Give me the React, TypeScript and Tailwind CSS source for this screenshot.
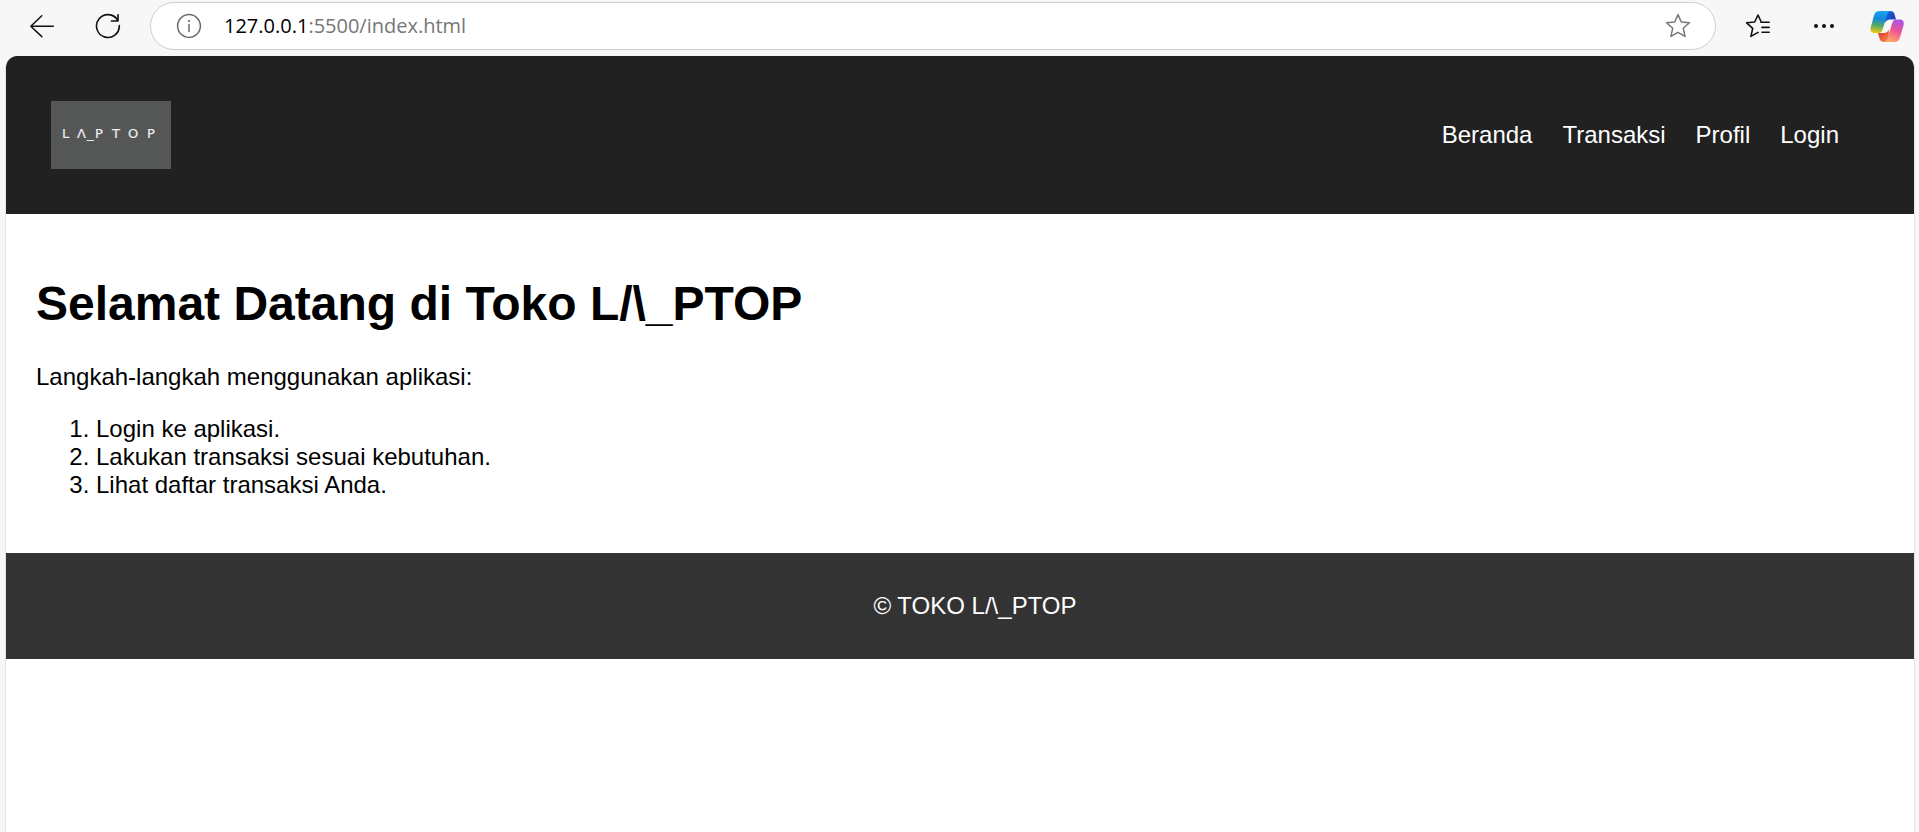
import React from "react";

const navLinks = ["Beranda", "Transaksi", "Profil", "Login"];

const steps = [
  "Login ke aplikasi.",
  "Lakukan transaksi sesuai kebutuhan.",
  "Lihat daftar transaksi Anda.",
];

function BackIcon() {
  return (
    <svg width="24" height="24" viewBox="0 0 24 24" fill="none" stroke="#111" strokeWidth="1.5" strokeLinecap="round" strokeLinejoin="round" aria-hidden="true">
      <path d="M23.3 12.2H.8M11.8 1.8.8 12.2l11 10.4" />
    </svg>
  );
}

function ReloadIcon() {
  return (
    <svg width="26" height="26" viewBox="0 0 26 26" fill="none" stroke="#111" strokeWidth="1.6" strokeLinecap="round" strokeLinejoin="round" aria-hidden="true">
      <path d="M24.3 12.5A11.4 11.4 0 1 1 22.6 7M23 1.8V8h-6.6" />
    </svg>
  );
}

function InfoIcon() {
  return (
    <svg width="26" height="26" viewBox="0 0 26 26" fill="none" stroke="#6a6a6a" strokeWidth="1.5" aria-hidden="true">
      <circle cx="13" cy="13" r="11.4" />
      <path d="M13 11.4v7.2" strokeLinecap="round" />
      <circle cx="13" cy="8" r="1.1" fill="#6a6a6a" stroke="none" />
    </svg>
  );
}

function StarIcon() {
  return (
    <svg width="26" height="26" viewBox="0 0 26 26" fill="none" stroke="#777" strokeWidth="1.5" strokeLinejoin="round" aria-hidden="true">
      <path d="M13 1.6 16.3 9l8.1.8-6.1 5.5 1.8 8.1L13 19.3l-7.1 4.1 1.8-8.1-6.1-5.5L9.7 9z" />
    </svg>
  );
}

function FavoritesIcon() {
  return (
    <svg width="26" height="26" viewBox="0 0 26 26" fill="none" stroke="#111" strokeWidth="1.6" strokeLinecap="round" strokeLinejoin="round" aria-hidden="true">
      <path d="M16 8.5 13 2 9.7 9 1.6 9.8l6.1 5.5-1.8 8.1 7.2-4" />
      <path d="M16 9.2h8.2M17 14.4h7.2M17 19.2h7.2" />
    </svg>
  );
}

function MoreIcon() {
  return (
    <svg width="22" height="6" viewBox="0 0 22 6" fill="#111" aria-hidden="true">
      <circle cx="3" cy="3" r="2" />
      <circle cx="11" cy="3" r="2" />
      <circle cx="19" cy="3" r="2" />
    </svg>
  );
}

function CopilotIcon() {
  return (
    <svg width="34" height="31" viewBox="0 0 34 31" aria-hidden="true">
      <defs>
        <linearGradient id="cp-left" x1="10" y1="0" x2="7" y2="22" gradientUnits="userSpaceOnUse">
          <stop offset="0" stopColor="#17a5f0" />
          <stop offset=".35" stopColor="#1787dc" />
          <stop offset=".68" stopColor="#58ac64" />
          <stop offset="1" stopColor="#f2cb0b" />
        </linearGradient>
        <linearGradient id="cp-top" x1="14" y1="2" x2="25" y2="8" gradientUnits="userSpaceOnUse">
          <stop offset="0" stopColor="#1268d8" />
          <stop offset="1" stopColor="#1b3fc0" />
        </linearGradient>
        <linearGradient id="cp-right" x1="29" y1="8" x2="20" y2="31" gradientUnits="userSpaceOnUse">
          <stop offset="0" stopColor="#a552ea" />
          <stop offset=".5" stopColor="#ed5594" />
          <stop offset="1" stopColor="#ffad62" />
        </linearGradient>
        <linearGradient id="cp-bottom" x1="10" y1="22" x2="16" y2="30" gradientUnits="userSpaceOnUse">
          <stop offset="0" stopColor="#d9472d" />
          <stop offset="1" stopColor="#fb7a4c" />
        </linearGradient>
      </defs>
      <path d="M15 0h5c3 0 4 1.5 4.6 3.5L26 8.5h-6c-2.5 0-4 1.3-4.8 3.5z" fill="url(#cp-top)" />
      <path d="M19 31h-5c-2.8 0-3.9-1.5-4.5-3.5L8 22h6c2.5 0 4-1.3 4.8-3.5z" fill="url(#cp-bottom)" />
      <path d="M9.5 0H21c-2.2.3-3.2 1.8-3.9 4l-4.5 14.5C11.8 21 10.5 22 8 22H4.500C1 22 0 19.500.8 16L4 4.500C4.900 1.400 6.700 0 9.500 0z" fill="url(#cp-left)" />
      <path d="M24.500 31H14c2.100-.3 3-1.800 3.700-4L22 12.500c.8-2.700 2.300-4 4.700-4h3c3.500 0 4.700 2.500 3.800 6L30 26.500c-.9 3.100-2.700 4.500-5.500 4.500z" fill="url(#cp-right)" />
    </svg>
  );
}

function Logo() {
  return (
    <svg width="120" height="68" viewBox="0 0 120 68" role="img" aria-label="Laptop" className="block bg-[#555756]">
      <text y="37" x="11 26 36 44 61 77 96" fill="#eeeeee" stroke="#eeeeee" strokeWidth="0.2" fontSize="13" fontFamily="'DejaVu Sans', sans-serif">
        LΛ_PTOP
      </text>
    </svg>
  );
}

export default function App() {
  return (
    <div className="flex min-h-screen flex-col bg-[#f7f7f7]">
      <div className="flex h-14 items-start pt-[2px] pr-[15px] pl-[29px]">
        <div className="flex h-12 w-full items-center">
          <button type="button" aria-label="Kembali" className="flex w-[26px] shrink-0 justify-center">
            <BackIcon />
          </button>
          <button type="button" aria-label="Muat ulang" className="ml-10 shrink-0">
            <ReloadIcon />
          </button>
          <div className="ml-[29px] flex h-12 min-w-0 flex-1 items-center rounded-full border border-[#cfcfcf] bg-white pr-6 pl-[25px]">
            <button type="button" aria-label="Informasi situs" className="shrink-0">
              <InfoIcon />
            </button>
            <div className="ml-[22px] min-w-0 flex-1 truncate font-['Open_Sans',sans-serif] text-[20px] leading-7 text-[#767676]">
              <span className="text-black">127.0.0.1</span>:5500/index.html
            </div>
            <button type="button" aria-label="Tambahkan ke favorit" className="shrink-0">
              <StarIcon />
            </button>
          </div>
          <button type="button" aria-label="Favorit" className="ml-[29px] shrink-0">
            <FavoritesIcon />
          </button>
          <button type="button" aria-label="Lainnya" className="ml-[42px] shrink-0">
            <MoreIcon />
          </button>
          <button type="button" aria-label="Copilot" className="ml-[35px] shrink-0">
            <CopilotIcon />
          </button>
        </div>
      </div>

      <div className="mr-1 ml-[5px] flex-1 overflow-hidden rounded-t-xl border-x border-[#e4e4e4] bg-white font-['Liberation_Sans',Arial,sans-serif] text-[24px] leading-7 text-black">
        <header className="flex items-center justify-between bg-[#212121] p-[45px]">
          <Logo />
          <nav className="flex gap-[30px] pr-[30px] text-white">
            {navLinks.map((label) => (
              <a key={label} href="#">
                {label}
              </a>
            ))}
          </nav>
        </header>

        <main className="p-[30px]">
          <h1 className="my-8 text-[48px] leading-[55px] font-bold">{"Selamat Datang di Toko L/\\_PTOP"}</h1>
          <p className="my-6">Langkah-langkah menggunakan aplikasi:</p>
          <ol className="my-6 list-decimal pl-[60px]">
            {steps.map((step) => (
              <li key={step}>{step}</li>
            ))}
          </ol>
        </main>

        <footer className="bg-[#333333] py-[39px] pl-[30px] text-center text-white">
          <p>{"© TOKO L/\\_PTOP"}</p>
        </footer>
      </div>
    </div>
  );
}
